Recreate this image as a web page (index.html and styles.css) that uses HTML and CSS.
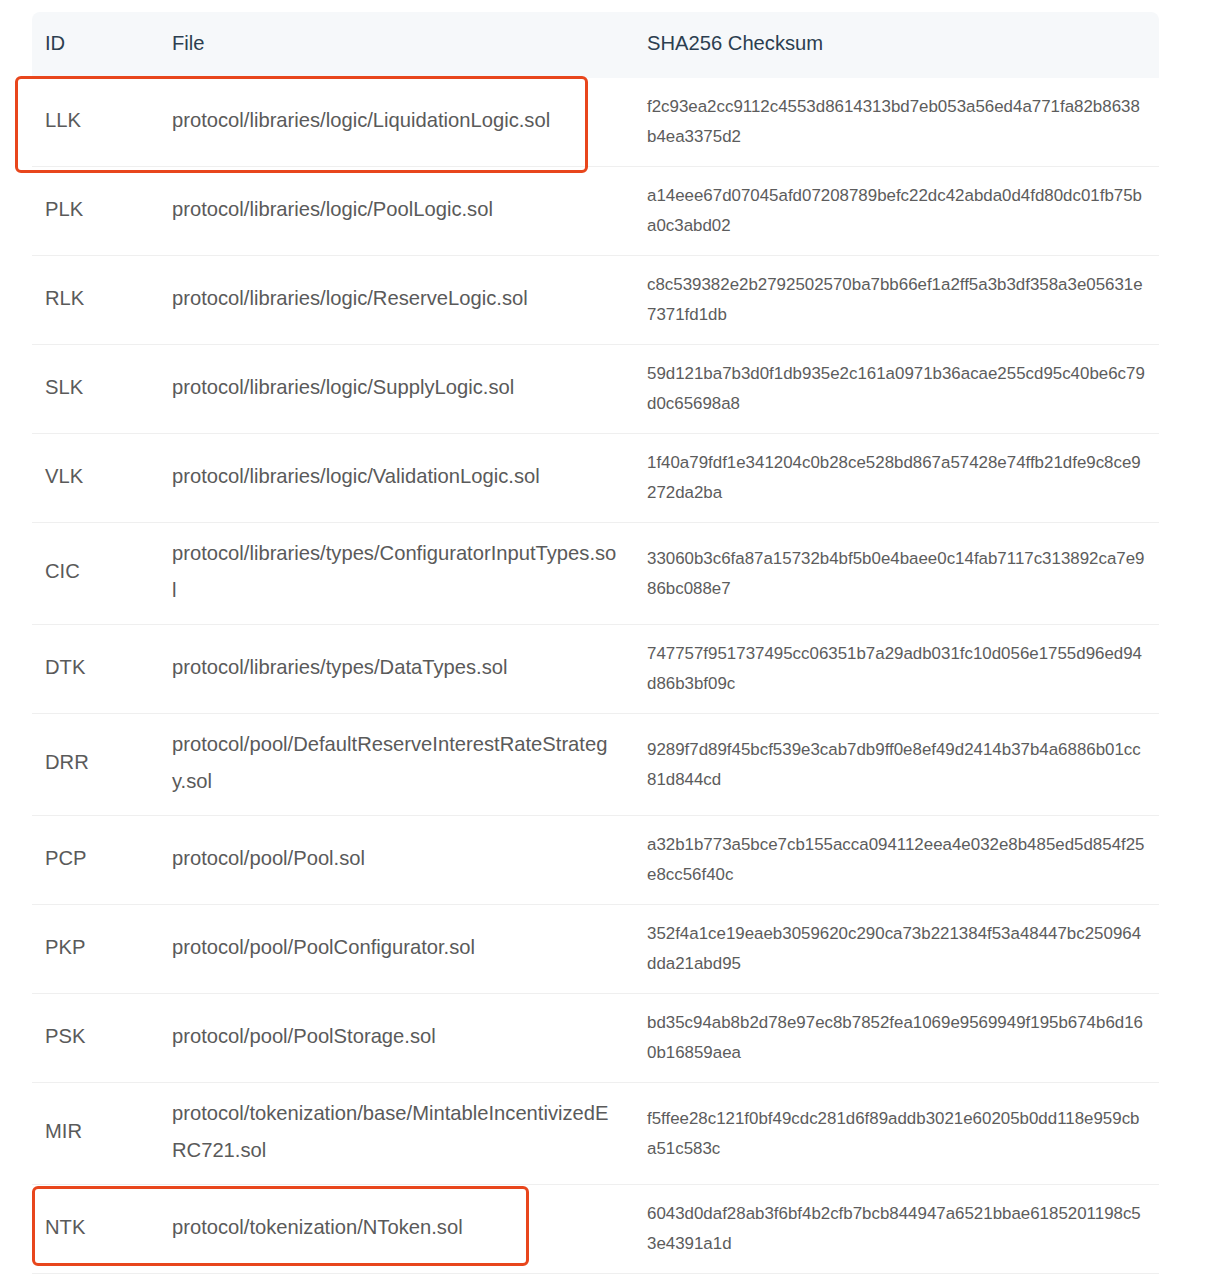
FILE: index.html
```html
<!DOCTYPE html>
<html lang="en">
<head>
  <meta charset="UTF-8" />
  <title>Audit Scope - File Checksums</title>
  <link rel="stylesheet" href="styles.css">
</head>
<body>

<div class="wrap">
  <table class="files">
    <colgroup>
      <col class="c-id">
      <col class="c-file">
      <col class="c-sum">
    </colgroup>
    <thead>
      <tr><th>ID</th><th>File</th><th>SHA256 Checksum</th></tr>
    </thead>
    <tbody>
      <tr><td>LLK</td><td>protocol/libraries/logic/LiquidationLogic.sol</td><td class="sum">f2c93ea2cc9112c4553d8614313bd7eb053a56ed4a771fa82b8638<br>b4ea3375d2</td></tr>
      <tr><td>PLK</td><td>protocol/libraries/logic/PoolLogic.sol</td><td class="sum">a14eee67d07045afd07208789befc22dc42abda0d4fd80dc01fb75b<br>a0c3abd02</td></tr>
      <tr><td>RLK</td><td>protocol/libraries/logic/ReserveLogic.sol</td><td class="sum">c8c539382e2b2792502570ba7bb66ef1a2ff5a3b3df358a3e05631e<br>7371fd1db</td></tr>
      <tr><td>SLK</td><td>protocol/libraries/logic/SupplyLogic.sol</td><td class="sum">59d121ba7b3d0f1db935e2c161a0971b36acae255cd95c40be6c79<br>d0c65698a8</td></tr>
      <tr><td>VLK</td><td>protocol/libraries/logic/ValidationLogic.sol</td><td class="sum">1f40a79fdf1e341204c0b28ce528bd867a57428e74ffb21dfe9c8ce9<br>272da2ba</td></tr>
      <tr><td>CIC</td><td>protocol/libraries/types/ConfiguratorInputTypes.so<br>l</td><td class="sum">33060b3c6fa87a15732b4bf5b0e4baee0c14fab7117c313892ca7e9<br>86bc088e7</td></tr>
      <tr><td>DTK</td><td>protocol/libraries/types/DataTypes.sol</td><td class="sum">747757f951737495cc06351b7a29adb031fc10d056e1755d96ed94<br>d86b3bf09c</td></tr>
      <tr><td>DRR</td><td>protocol/pool/DefaultReserveInterestRateStrateg<br>y.sol</td><td class="sum">9289f7d89f45bcf539e3cab7db9ff0e8ef49d2414b37b4a6886b01cc<br>81d844cd</td></tr>
      <tr><td>PCP</td><td>protocol/pool/Pool.sol</td><td class="sum">a32b1b773a5bce7cb155acca094112eea4e032e8b485ed5d854f25<br>e8cc56f40c</td></tr>
      <tr><td>PKP</td><td>protocol/pool/PoolConfigurator.sol</td><td class="sum">352f4a1ce19eaeb3059620c290ca73b221384f53a48447bc250964<br>dda21abd95</td></tr>
      <tr><td>PSK</td><td>protocol/pool/PoolStorage.sol</td><td class="sum">bd35c94ab8b2d78e97ec8b7852fea1069e9569949f195b674b6d16<br>0b16859aea</td></tr>
      <tr><td>MIR</td><td>protocol/tokenization/base/MintableIncentivizedE<br>RC721.sol</td><td class="sum">f5ffee28c121f0bf49cdc281d6f89addb3021e60205b0dd118e959cb<br>a51c583c</td></tr>
      <tr><td>NTK</td><td>protocol/tokenization/NToken.sol</td><td class="sum">6043d0daf28ab3f6bf4b2cfb7bcb844947a6521bbae6185201198c5<br>3e4391a1d</td></tr>
    </tbody>
  </table>

  <!-- highlight marks -->
  <div class="mark mark-llk"></div>
  <div class="mark mark-ntk"></div>
</div>

</body>
</html>
```

FILE: styles.css
```css
body { margin: 0; background: #fff; font-family: "Liberation Sans", Arial, sans-serif; color: #5a5a5a; }
.wrap { position: relative; width: 1127px; margin: 12px 0 0 32px; }
.files { width: 100%; table-layout: fixed; border-collapse: separate; border-spacing: 0; font-size: 20.2px; }
.c-id { width: 127px; }
.c-file { width: 475px; }
.c-sum { width: 525px; }
th { background: #f6f8fa; color: #2c3e50; font-weight: normal; text-align: left; padding: 18px 13px 22px; line-height: 26px; }
th:first-child { border-top-left-radius: 8px; }
th:last-child { border-top-right-radius: 8px; }
td { padding: 12px 13px 16px; line-height: 36.5px; border-bottom: 1px solid #efefef; vertical-align: middle; word-break: break-all; }
td.sum { padding: 14px 13px; font-size: 16.9px; line-height: 30px; color: #5c5c5c; }
.mark { position: absolute; border: 3px solid #e8461c; border-radius: 6px; box-sizing: border-box; }
.mark-llk { left: -17px; top: 64px; width: 573px; height: 97px; }
.mark-ntk { left: 0; top: 1174px; width: 497px; height: 80px; }
```
